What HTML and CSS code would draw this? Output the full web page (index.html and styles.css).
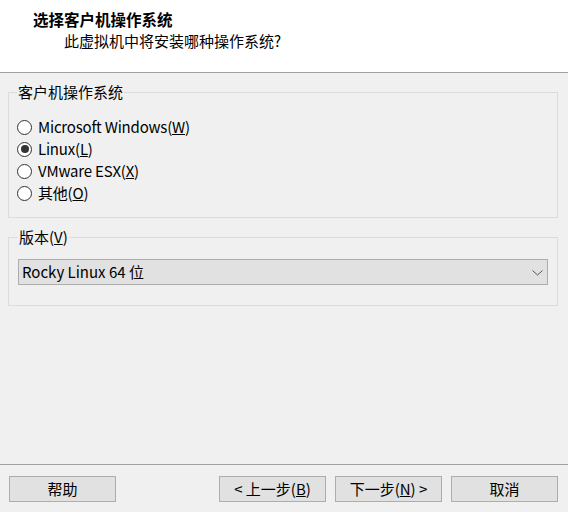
FILE: index.html
```html
<!DOCTYPE html>
<html lang="zh-CN">
<head>
<meta charset="utf-8">
<link rel="stylesheet" href="styles.css">
</head>
<body>
<div class="wizard">
  <header class="head">
    <div class="title">选择客户机操作系统</div>
    <div class="subtitle">此虚拟机中将安装哪种操作系统?</div>
  </header>
  <main class="content">
    <fieldset class="group group-os">
      <legend>客户机操作系统</legend>
      <div class="radio-row"><span class="radio"></span><span>Microsoft Windows(<u>W</u>)</span></div>
      <div class="radio-row"><span class="radio checked"></span><span>Linux(<u>L</u>)</span></div>
      <div class="radio-row"><span class="radio"></span><span>VMware ESX(<u>X</u>)</span></div>
      <div class="radio-row"><span class="radio"></span><span>其他(<u>O</u>)</span></div>
    </fieldset>
    <fieldset class="group group-ver">
      <legend>版本(<u>V</u>)</legend>
      <div class="combo">
        <span class="combo-text">Rocky Linux 64 位</span>
        <svg class="chev" width="11" height="6" viewBox="0 0 11 6"><path d="M0.5 0.5 L5.5 5 L10.5 0.5" fill="none" stroke="#555" stroke-width="1"/></svg>
      </div>
    </fieldset>
  </main>
  <footer class="foot">
    <button class="btn">帮助</button>
    <div class="spacer"></div>
    <button class="btn">&lt; 上一步(<u>B</u>)</button>
    <button class="btn">下一步(<u>N</u>) &gt;</button>
    <button class="btn">取消</button>
  </footer>
</div>
</body>
</html>
```

FILE: styles.css
```css
html, body {
  margin: 0;
  padding: 0;
}
body {
  background: #f0f0f0;
  font-family: "Noto Sans CJK SC", "Noto Sans", sans-serif;
  font-size: 15px;
  color: #000;
}
.wizard {
  width: 568px;
  height: 512px;
  display: flex;
  flex-direction: column;
}
.head {
  box-sizing: border-box;
  background: #fff;
  border-bottom: 1px solid #a0a0a0;
  height: 73px;
  padding: 8px 0 0 33px;
}
.title {
  font-weight: bold;
  line-height: 22px;
  font-size: 15.5px;
}
.subtitle {
  margin-left: 31px;
  line-height: 22px;
}
.content {
  flex: 1;
  padding: 11px 10px 0 8px;
}
.group {
  margin: 0;
  border: 1px solid #dcdcdc;
  padding: 16px 9px 13px 8px;
  min-width: 0;
}
.group legend {
  padding: 0 1px;
  line-height: 16px;
}
.group-ver {
  margin-top: 11px;
  padding: 14px 9px 20px 9px;
}
.radio-row {
  display: flex;
  align-items: center;
  height: 22px;
  line-height: 22px;
  gap: 6px;
  letter-spacing: -0.2px;
}
.radio {
  width: 15px;
  height: 15px;
  box-sizing: border-box;
  border: 1px solid #333;
  border-radius: 50%;
  background: #fff;
  display: flex;
  align-items: center;
  justify-content: center;
  flex: none;
}
.radio.checked::after {
  content: "";
  width: 8px;
  height: 8px;
  border-radius: 50%;
  background: #333;
}
.combo {
  height: 26px;
  box-sizing: border-box;
  border: 1px solid #adadad;
  background: #e1e1e1;
  display: flex;
  align-items: center;
  justify-content: space-between;
  padding: 0 4px 0 3px;
}
.combo-text {
  line-height: 24px;
}
.chev {
  display: block;
  margin-top: 1px;
}
.foot {
  height: 48px;
  box-sizing: border-box;
  border-top: 1px solid #a0a0a0;
  padding: 11px 10px 0 9px;
  display: flex;
  align-items: flex-start;
  gap: 9px;
}
.spacer {
  flex: 1;
}
.btn {
  width: 107px;
  height: 26px;
  box-sizing: border-box;
  border: 1px solid #adadad;
  background: #e1e1e1;
  font-family: inherit;
  font-size: 15px;
  color: #000;
  padding: 0;
  line-height: 24px;
}
```
